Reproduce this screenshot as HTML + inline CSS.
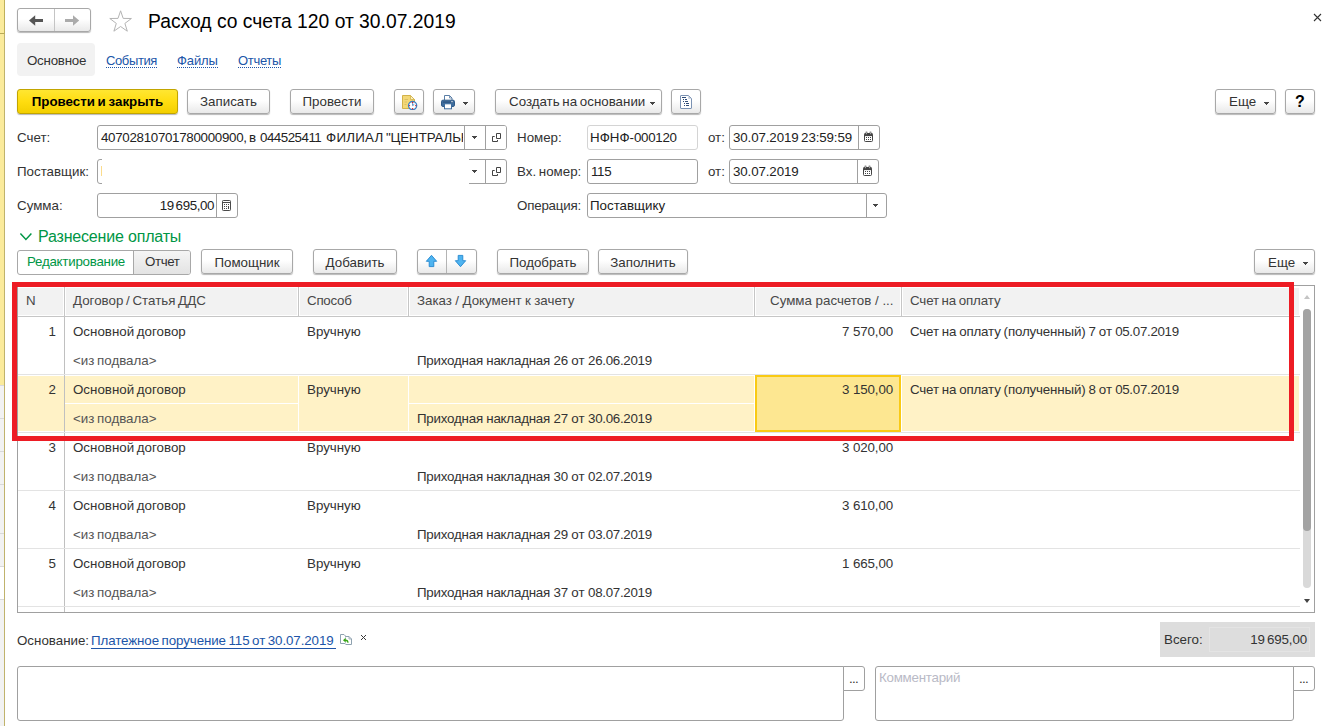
<!DOCTYPE html>
<html lang="ru">
<head>
<meta charset="utf-8">
<title>Расход со счета 120 от 30.07.2019</title>
<style>
html,body{margin:0;padding:0;}
body{width:1322px;height:726px;position:relative;overflow:hidden;background:#fff;
  font-family:"Liberation Sans",sans-serif;font-size:13.33px;color:#333;word-spacing:-1px;}
.a{position:absolute;white-space:nowrap;}
.t{position:absolute;white-space:nowrap;line-height:16px;height:16px;}
.btn{position:absolute;box-sizing:border-box;border:1px solid #a8a8a8;border-radius:3px;
  background:linear-gradient(#ffffff 0%,#ffffff 45%,#e9e9e9 100%);
  box-shadow:0 1px 1px rgba(0,0,0,.28);height:25px;line-height:23px;text-align:center;white-space:nowrap;color:#333;}
.fld{position:absolute;box-sizing:border-box;border:1px solid #a0a0a0;border-radius:3px;background:#fff;height:25px;line-height:23px;white-space:nowrap;overflow:hidden;color:#222;}
.fld .v{position:absolute;left:2px;top:0;}
.sep{position:absolute;top:0;bottom:0;width:1px;background:#a0a0a0;}
.lnk{color:#2055a8;}
.n{letter-spacing:-0.3px;}
.d{letter-spacing:-0.12px;}
.p1{letter-spacing:-0.21px;}
.p2{letter-spacing:-0.16px;}
.m{letter-spacing:-0.12px;word-spacing:0;}
.dots{text-align:center;line-height:23px;letter-spacing:-0.7px;color:#333;text-indent:-1px;}
.dd{position:absolute;width:0;height:0;border-left:2.5px solid transparent;border-right:2.5px solid transparent;border-top:3px solid #444;}
</style>
</head>
<body>

<!-- left strip -->
<div class="a" style="left:0;top:0;width:4px;height:385px;background:#fbeb9c;"></div>
<div class="a" style="left:0;top:385px;width:4px;height:341px;background:#f2f2f2;"></div>
<div class="a" style="left:0;top:566px;width:4px;height:33px;background:#fff;"></div>
<div class="a" style="left:4px;top:0;width:1px;height:726px;background:#c0b36c;"></div>
<div class="a" style="left:4px;top:0;width:1px;height:34px;background:#bfb05a;"></div>
<div class="a" style="left:0;top:33px;width:4px;height:1px;background:#b8a957;"></div>
<div class="a" style="left:0;top:385px;width:4px;height:1px;background:#d9d9d9;"></div>
<div class="a" style="left:0;top:418px;width:4px;height:1px;background:#d9d9d9;"></div>
<div class="a" style="left:0;top:451px;width:4px;height:1px;background:#d9d9d9;"></div>
<div class="a" style="left:0;top:484px;width:4px;height:1px;background:#d9d9d9;"></div>
<div class="a" style="left:0;top:533px;width:4px;height:1px;background:#d9d9d9;"></div>
<div class="a" style="left:0;top:566px;width:4px;height:1px;background:#d9d9d9;"></div>
<div class="a" style="left:0;top:599px;width:4px;height:1px;background:#d9d9d9;"></div>

<!-- header -->
<div id="nav" class="btn" style="left:17px;top:8px;width:74px;height:24px;"></div>
<div class="a" style="left:54px;top:9px;width:1px;height:22px;background:#c4c4c4;"></div>
<svg class="a" style="left:17px;top:8px;" width="74" height="24" viewBox="0 0 74 24">
  <path d="M12 12.5 L18.2 7.2 L18.2 11 L26 11 L26 14 L18.2 14 L18.2 17.8 Z" fill="#555"/>
  <path d="M62.2 12.5 L56 7.2 L56 11 L48 11 L48 14 L56 14 L56 17.8 Z" fill="#ababab"/>
</svg>
<svg class="a" style="left:108px;top:9px;" width="26" height="24" viewBox="0 0 26 24">
  <path d="M12.6 1.8 L15.2 9.4 L23.4 9.5 L16.9 14.4 L19.3 22.2 L12.6 17.5 L5.9 22.2 L8.3 14.4 L1.8 9.5 L10 9.4 Z" fill="#fff" stroke="#b4b4b4" stroke-width="1"/>
</svg>
<div id="title" class="a" style="left:148px;top:10px;font-size:19.3px;line-height:24px;color:#000;word-spacing:0;">Расход со счета 120 от 30.07.2019</div>
<svg class="a" style="left:1313px;top:13px;" width="9" height="9" viewBox="0 0 9 9"><path d="M1 1 L8 8 M8 1 L1 8" stroke="#333" stroke-width="1.1" fill="none"/></svg>

<!-- tabs -->
<div class="a" style="left:17px;top:43px;width:78px;height:33px;background:#f2f2f2;border-radius:4px;"></div>
<div class="t" id="tab1" style="left:27px;top:53px;color:#333;letter-spacing:-0.25px;">Основное</div>
<div class="t lnk" id="tab2" style="left:106px;top:53px;border-bottom:1px dotted #2055a8;height:14px;font-size:13px;letter-spacing:-0.38px;">События</div>
<div class="t lnk" id="tab3" style="left:177px;top:53px;border-bottom:1px dotted #2055a8;height:14px;font-size:13px;letter-spacing:-0.1px;">Файлы</div>
<div class="t lnk" id="tab4" style="left:238px;top:53px;border-bottom:1px dotted #2055a8;height:14px;font-size:13px;letter-spacing:-0.32px;">Отчеты</div>

<!-- main toolbar -->
<div class="btn" id="b1" style="left:17px;top:89px;width:161px;background:linear-gradient(#ffe632 0%,#ffdd10 50%,#f3cf00 100%);border-color:#c2a500;color:#000;font-weight:bold;">Провести и закрыть</div>
<div class="btn" id="b2" style="left:187px;top:89px;width:83px;">Записать</div>
<div class="btn" id="b3" style="left:290px;top:89px;width:84px;">Провести</div>
<div class="btn" id="b4" style="left:394px;top:89px;width:30px;"></div>
<svg class="a" style="left:400px;top:94px;" width="18" height="16" viewBox="0 0 18 16">
  <path d="M2.5 1.5 L10.5 1.5 L14.5 5.5 L14.5 14.5 L2.5 14.5 Z" fill="#f3d877" stroke="#d2b24a" stroke-width="1"/>
  <path d="M10.5 1.5 L10.5 5.5 L14.5 5.5 Z" fill="#fbf0c0" stroke="#d2b24a" stroke-width="0.8"/>
  <path d="M4.5 5.5 H8 M4.5 8 H7 M4.5 10.5 H6.5" stroke="#dcc062" stroke-width="1"/>
  <circle cx="12.6" cy="11.6" r="4.1" fill="#fff" stroke="#3b7fc1" stroke-width="1.3"/>
  <path d="M12.6 11.6 L12.6 9.2 M12.6 11.6 L14.3 10.4" stroke="#3b7fc1" stroke-width="0.9" fill="none"/>
  <circle cx="12.6" cy="8.5" r="0.7" fill="#e21d1d"/><circle cx="12.6" cy="14.7" r="0.7" fill="#e21d1d"/>
  <circle cx="9.5" cy="11.6" r="0.7" fill="#e21d1d"/><circle cx="15.7" cy="11.6" r="0.7" fill="#e21d1d"/>
</svg>
<div class="btn" id="b5" style="left:433px;top:89px;width:42px;"></div>
<svg class="a" style="left:439px;top:94px;" width="18" height="16" viewBox="0 0 18 16">
  <path d="M5.5 6 L5.5 1.5 L10.5 1.5 L13 4 L13 6" fill="#fff" stroke="#5a7ea6" stroke-width="1"/>
  <path d="M10.5 1.5 L10.5 4 L13 4" fill="none" stroke="#5a7ea6" stroke-width="0.8"/>
  <rect x="2.5" y="6.2" width="13" height="6.3" rx="1.4" fill="#3e6d9e" stroke="#2f5a88" stroke-width="1"/>
  <rect x="4" y="7.6" width="10" height="1" fill="#2a4f79"/>
  <rect x="12.2" y="7.3" width="1.6" height="0.9" fill="#fff"/>
  <rect x="5.5" y="9.8" width="7" height="5" fill="#fff" stroke="#3e6d9e" stroke-width="1"/>
</svg>
<svg class="a" style="left:462px;top:102px;" width="7" height="4" viewBox="0 0 7 4"><path d="M1 0 H6 V1 H5 V2 H4 V3 H3 V2 H2 V1 H1 Z" fill="#454545"/></svg>
<div class="btn" id="b6" style="left:495px;top:89px;width:167px;text-align:left;padding-left:13px;">Создать на основании</div>
<svg class="a" style="left:649px;top:102px;" width="7" height="4" viewBox="0 0 7 4"><path d="M1 0 H6 V1 H5 V2 H4 V3 H3 V2 H2 V1 H1 Z" fill="#454545"/></svg>
<div class="btn" id="b7" style="left:671px;top:89px;width:30px;"></div>
<svg class="a" style="left:678px;top:94px;" width="16" height="16" viewBox="0 0 16 16">
  <path d="M2.5 2 Q2.5 1.5 3 1.5 L10.5 1.5 L13.5 4.5 L13.5 14 Q13.5 14.5 13 14.5 L3 14.5 Q2.5 14.5 2.5 14 Z" fill="#fff" stroke="#7b92b3" stroke-width="1"/>
  <path d="M10.3 1.7 L10.3 4.7 L13.3 4.7 Z" fill="#b9c6d8"/>
  <path d="M4 3.5 H8 M5 5.5 H6 M7 5.5 H9 M5 7.5 H6 M7 7.5 H10 M6 9.5 H7 M8 9.5 H11 M6 11.5 H7 M8 11.5 H11" stroke="#2f4c78" stroke-width="1"/>
</svg>
<div class="btn" id="b8" style="left:1215px;top:89px;width:61px;text-align:left;padding-left:13px;">Еще</div>
<svg class="a" style="left:1263px;top:102px;" width="7" height="4" viewBox="0 0 7 4"><path d="M1 0 H6 V1 H5 V2 H4 V3 H3 V2 H2 V1 H1 Z" fill="#454545"/></svg>
<div class="btn" id="b9" style="left:1285px;top:89px;width:30px;color:#000;font-weight:bold;font-size:16px;line-height:24px;">?</div>

<!-- fields -->
<div class="t" style="left:17px;top:130px;">Счет:</div>
<div class="fld" style="left:97px;top:125px;width:410px;"><span class="v n" style="left:3px;">40702810701780000900,</span><span class="v" style="left:151px;">в</span><span class="v n" style="left:162px;letter-spacing:-0.5px;">044525411</span><span class="v" style="left:228px;letter-spacing:0.25px;">ФИЛИАЛ</span><span class="v" style="left:288px;letter-spacing:-0.12px;">"ЦЕНТРАЛЬНЫЙ"</span>
  <div class="a" style="left:364.5px;top:0;width:45px;height:23px;background:#fff;"></div>
  <div class="sep" style="left:366px;"></div><div class="sep" style="left:387px;"></div></div>
<svg class="a" style="left:471px;top:136px;" width="7" height="4" viewBox="0 0 7 4"><path d="M1 0 H6 V1 H5 V2 H4 V3 H3 V2 H2 V1 H1 Z" fill="#454545"/></svg>
<svg class="a" style="left:491px;top:132px;" width="12" height="12" viewBox="0 0 12 12"><path d="M5.5 1.5 H9.5 V6.5 H5.5 Z" fill="none" stroke="#444" stroke-width="1"/><path d="M3.7 4.5 H1.5 V9.5 H6.5 V8" fill="none" stroke="#444" stroke-width="1"/></svg>

<div class="t" style="left:17px;top:164px;">Поставщик:</div>
<div class="fld" style="left:97px;top:159px;width:410px;">
  <div class="sep" style="left:387px;"></div></div>
<div class="a" style="left:102px;top:158px;width:367px;height:27px;background:#fff;"></div>
<div class="a" style="left:101px;top:166px;width:1px;height:10px;background:#fbdc8c;"></div>
<svg class="a" style="left:471px;top:170px;" width="7" height="4" viewBox="0 0 7 4"><path d="M1 0 H6 V1 H5 V2 H4 V3 H3 V2 H2 V1 H1 Z" fill="#454545"/></svg>
<svg class="a" style="left:491px;top:166px;" width="12" height="12" viewBox="0 0 12 12"><path d="M5.5 1.5 H9.5 V6.5 H5.5 Z" fill="none" stroke="#444" stroke-width="1"/><path d="M3.7 4.5 H1.5 V9.5 H6.5 V8" fill="none" stroke="#444" stroke-width="1"/></svg>

<div class="t" style="left:17px;top:198px;">Сумма:</div>
<div class="fld" style="left:97px;top:193px;width:141px;"><span class="a m" style="right:23px;top:0;word-spacing:-1.5px;letter-spacing:-0.4px;">19 695,00</span><div class="sep" style="left:118px;"></div></div>
<svg class="a" style="left:222px;top:200px;" width="10" height="12" viewBox="0 0 10 12"><rect x="0.5" y="0.5" width="8" height="10" rx="0.8" fill="#fff" stroke="#4a4a4a" stroke-width="1"/><path d="M1 2.5 H8.5" stroke="#4a4a4a" stroke-width="1"/><g fill="#4a4a4a"><rect x="2" y="4" width="1" height="1"/><rect x="4" y="4" width="1" height="1"/><rect x="6" y="4" width="1" height="1"/><rect x="2" y="6" width="1" height="1"/><rect x="4" y="6" width="1" height="1"/><rect x="6" y="6" width="1" height="3"/><rect x="2" y="8" width="1" height="1"/><rect x="4" y="8" width="1" height="1"/></g></svg>

<div class="t" style="left:517px;top:130px;">Номер:</div>
<div class="fld" style="left:587px;top:125px;width:111px;border-color:#d4d4d4;"><span class="v">НФНФ-<span class="n">000120</span></span></div>
<div class="t" style="left:708px;top:130px;">от:</div>
<div class="fld" style="left:729px;top:125px;width:151px;"><span class="v d" style="left:3px;">30.07.2019 23:59:59</span><div class="sep" style="left:128px;"></div></div>
<svg class="a cal" style="left:864px;top:131px;" width="10" height="12" viewBox="0 0 10 12"><rect x="0.5" y="2.5" width="8" height="8" rx="0.9" fill="#fff" stroke="#444" stroke-width="1"/><rect x="0.5" y="2.5" width="8" height="2.6" fill="#444"/><rect x="2" y="1" width="1" height="2.2" fill="#fff" stroke="#444" stroke-width="0.6"/><rect x="6" y="1" width="1" height="2.2" fill="#fff" stroke="#444" stroke-width="0.6"/><g fill="#444"><rect x="2" y="6" width="1" height="1"/><rect x="4" y="6" width="1" height="1"/><rect x="6" y="6" width="1" height="1"/><rect x="2" y="8" width="1" height="1"/><rect x="4" y="8" width="1" height="1"/><rect x="6" y="8" width="1" height="1"/></g></svg>

<div class="t" style="left:517px;top:164px;">Вх. номер:</div>
<div class="fld" style="left:587px;top:159px;width:111px;"><span class="v n" style="left:3px;">115</span></div>
<div class="t" style="left:708px;top:164px;">от:</div>
<div class="fld" style="left:729px;top:159px;width:150px;"><span class="v d" style="left:3px;">30.07.2019</span><div class="sep" style="left:127px;"></div></div>
<svg class="a cal" style="left:863px;top:165px;" width="10" height="12" viewBox="0 0 10 12"><rect x="0.5" y="2.5" width="8" height="8" rx="0.9" fill="#fff" stroke="#444" stroke-width="1"/><rect x="0.5" y="2.5" width="8" height="2.6" fill="#444"/><rect x="2" y="1" width="1" height="2.2" fill="#fff" stroke="#444" stroke-width="0.6"/><rect x="6" y="1" width="1" height="2.2" fill="#fff" stroke="#444" stroke-width="0.6"/><g fill="#444"><rect x="2" y="6" width="1" height="1"/><rect x="4" y="6" width="1" height="1"/><rect x="6" y="6" width="1" height="1"/><rect x="2" y="8" width="1" height="1"/><rect x="4" y="8" width="1" height="1"/><rect x="6" y="8" width="1" height="1"/></g></svg>

<div class="t" style="left:517px;top:198px;letter-spacing:-0.2px;">Операция:</div>
<div class="fld" style="left:587px;top:193px;width:300px;"><span class="v">Поставщику</span><div class="sep" style="left:278px;"></div></div>
<svg class="a" style="left:872px;top:204px;" width="7" height="4" viewBox="0 0 7 4"><path d="M1 0 H6 V1 H5 V2 H4 V3 H3 V2 H2 V1 H1 Z" fill="#454545"/></svg>

<!-- section -->
<svg class="a" style="left:19px;top:232px;" width="14" height="10" viewBox="0 0 14 10"><path d="M1.4 1.6 L6.9 7.4 L12.4 1.6" stroke="#009646" stroke-width="1.5" fill="none"/></svg>
<div class="a" id="sect" style="left:38px;top:227px;font-size:16px;line-height:20px;color:#009646;letter-spacing:-0.18px;word-spacing:0;">Разнесение оплаты</div>

<!-- sub toolbar -->
<div class="btn" style="left:17px;top:250px;width:174px;box-shadow:none;background:#fff;"></div>
<div class="a" style="left:133px;top:251px;width:57px;height:23px;background:linear-gradient(#f5f5f5,#e3e3e3);border-left:1px solid #a8a8a8;border-radius:0 2px 2px 0;box-sizing:border-box;"></div>
<div class="t" id="tg1" style="left:27px;top:254px;color:#009646;letter-spacing:-0.25px;">Редактирование</div>
<div class="t" id="tg2" style="left:145px;top:254px;letter-spacing:-0.4px;">Отчет</div>
<div class="btn" style="left:201px;top:249px;width:92px;line-height:25px;">Помощник</div>
<div class="btn" style="left:313px;top:249px;width:84px;line-height:25px;">Добавить</div>
<div class="btn" style="left:417px;top:249px;width:60px;"></div>
<div class="a" style="left:446px;top:250px;width:1px;height:23px;background:#b4b4b4;"></div>
<svg class="a" style="left:417px;top:249px;" width="60" height="25" viewBox="0 0 60 25">
  <path d="M14.5 6.3 L19.7 12.3 L16.8 12.3 L16.8 17.6 L12.2 17.6 L12.2 12.3 L9.3 12.3 Z" fill="#4fb4f0" stroke="#2387cf" stroke-width="0.9"/>
  <path d="M43.5 17.7 L48.7 11.7 L45.8 11.7 L45.8 6.4 L41.2 6.4 L41.2 11.7 L38.3 11.7 Z" fill="#4fb4f0" stroke="#2387cf" stroke-width="0.9"/>
</svg>
<div class="btn" style="left:497px;top:249px;width:92px;line-height:25px;">Подобрать</div>
<div class="btn" style="left:598px;top:249px;width:90px;line-height:25px;">Заполнить</div>
<div class="btn" style="left:1254px;top:249px;width:61px;line-height:25px;text-align:left;padding-left:13px;">Еще</div>
<svg class="a" style="left:1302px;top:262px;" width="7" height="4" viewBox="0 0 7 4"><path d="M1 0 H6 V1 H5 V2 H4 V3 H3 V2 H2 V1 H1 Z" fill="#454545"/></svg>

<!-- TABLE START -->
<!-- table -->
<div class="a" style="left:17px;top:285px;width:1298px;height:328px;box-sizing:border-box;border:1px solid #a0a0a0;background:#fff;"></div>
<div class="a" style="left:18px;top:288px;width:1281px;height:27px;background:#f2f2f2;"></div>
<div class="a" style="left:18px;top:316px;width:1282px;height:1px;background:#c6c6c6;"></div>
<div class="a" style="left:63px;top:287px;width:1px;height:29px;background:#fff;"></div>
<div class="a" style="left:64px;top:287px;width:1px;height:29px;background:#c6c6c6;"></div>
<div class="a" style="left:65px;top:287px;width:1px;height:29px;background:#fff;"></div>
<div class="a" style="left:297px;top:287px;width:1px;height:29px;background:#fff;"></div>
<div class="a" style="left:298px;top:287px;width:1px;height:29px;background:#c6c6c6;"></div>
<div class="a" style="left:299px;top:287px;width:1px;height:29px;background:#fff;"></div>
<div class="a" style="left:407px;top:287px;width:1px;height:29px;background:#fff;"></div>
<div class="a" style="left:408px;top:287px;width:1px;height:29px;background:#c6c6c6;"></div>
<div class="a" style="left:409px;top:287px;width:1px;height:29px;background:#fff;"></div>
<div class="a" style="left:753px;top:287px;width:1px;height:29px;background:#fff;"></div>
<div class="a" style="left:754px;top:287px;width:1px;height:29px;background:#c6c6c6;"></div>
<div class="a" style="left:755px;top:287px;width:1px;height:29px;background:#fff;"></div>
<div class="a" style="left:900px;top:287px;width:1px;height:29px;background:#fff;"></div>
<div class="a" style="left:901px;top:287px;width:1px;height:29px;background:#c6c6c6;"></div>
<div class="a" style="left:902px;top:287px;width:1px;height:29px;background:#fff;"></div>
<div class="t th" style="left:26px;top:293px;color:#484848;">N</div>
<div class="t th" style="left:73px;top:293px;color:#484848;">Договор / Статья ДДС</div>
<div class="t th" style="left:307px;top:293px;color:#484848;letter-spacing:-0.25px;">Способ</div>
<div class="t th" style="left:417px;top:293px;color:#484848;word-spacing:-0.3px;">Заказ / Документ к зачету</div>
<div class="t th" style="left:770px;top:293px;color:#484848;word-spacing:0;">Сумма расчетов / ...</div>
<div class="t th" style="left:910px;top:293px;color:#484848;letter-spacing:-0.12px;">Счет на оплату</div>
<div class="a" style="left:64px;top:317px;width:1px;height:295px;background:#c0c0c0;"></div>
<div class="a" style="left:18px;top:374px;width:1282px;height:1px;background:#e3e3e3;"></div>
<div class="t" style="left:20px;width:36px;text-align:right;top:324px;">1</div>
<div class="t" style="left:73px;top:324px;">Основной договор</div>
<div class="t" style="left:73px;top:353px;color:#555;">&lt;из подвала&gt;</div>
<div class="t" style="left:307px;top:324px;">Вручную</div>
<div class="t" style="left:417px;top:353px;word-spacing:-0.2px;"><span class="p1">Приходная накладная</span> <span class="n">26</span> от <span class="n">26.06.2019</span></div>
<div class="t" style="left:755px;width:138px;text-align:right;top:324px;"><span class="m">7 570,00</span></div>
<div class="t" style="left:910px;top:324px;word-spacing:-0.6px;"><span class="p2">Счет на оплату (полученный)</span> <span class="n">7</span> от <span class="n">05.07.2019</span></div>
<div class="a" style="left:18px;top:376px;width:46px;height:55px;background:#fff2c6;"></div>
<div class="a" style="left:65px;top:376px;width:1234px;height:55px;background:#fff2c6;"></div>
<div class="a" style="left:298px;top:376px;width:1px;height:55px;background:#fff;"></div>
<div class="a" style="left:408px;top:376px;width:1px;height:55px;background:#fff;"></div>
<div class="a" style="left:754px;top:376px;width:1px;height:55px;background:#fff;"></div>
<div class="a" style="left:901px;top:376px;width:1px;height:55px;background:#fff;"></div>
<div class="a" style="left:65px;top:403px;width:233px;height:1px;background:#fff;"></div>
<div class="a" style="left:409px;top:403px;width:345px;height:1px;background:#fff;"></div>
<div class="a" style="left:755px;top:375px;width:146px;height:57px;box-sizing:border-box;border:2px solid #f9ca14;background:#fde791;"></div>
<div class="a" style="left:18px;top:432px;width:1282px;height:1px;background:#e3e3e3;"></div>
<div class="t" style="left:20px;width:36px;text-align:right;top:382px;">2</div>
<div class="t" style="left:73px;top:382px;">Основной договор</div>
<div class="t" style="left:73px;top:411px;color:#555;">&lt;из подвала&gt;</div>
<div class="t" style="left:307px;top:382px;">Вручную</div>
<div class="t" style="left:417px;top:411px;word-spacing:-0.2px;"><span class="p1">Приходная накладная</span> <span class="n">27</span> от <span class="n">30.06.2019</span></div>
<div class="t" style="left:755px;width:138px;text-align:right;top:382px;"><span class="m">3 150,00</span></div>
<div class="t" style="left:910px;top:382px;word-spacing:-0.6px;"><span class="p2">Счет на оплату (полученный)</span> <span class="n">8</span> от <span class="n">05.07.2019</span></div>
<div class="a" style="left:18px;top:490px;width:1282px;height:1px;background:#e3e3e3;"></div>
<div class="t" style="left:20px;width:36px;text-align:right;top:440px;">3</div>
<div class="t" style="left:73px;top:440px;">Основной договор</div>
<div class="t" style="left:73px;top:469px;color:#555;">&lt;из подвала&gt;</div>
<div class="t" style="left:307px;top:440px;">Вручную</div>
<div class="t" style="left:417px;top:469px;word-spacing:-0.2px;"><span class="p1">Приходная накладная</span> <span class="n">30</span> от <span class="n">02.07.2019</span></div>
<div class="t" style="left:755px;width:138px;text-align:right;top:440px;"><span class="m">3 020,00</span></div>
<div class="a" style="left:18px;top:548px;width:1282px;height:1px;background:#e3e3e3;"></div>
<div class="t" style="left:20px;width:36px;text-align:right;top:498px;">4</div>
<div class="t" style="left:73px;top:498px;">Основной договор</div>
<div class="t" style="left:73px;top:527px;color:#555;">&lt;из подвала&gt;</div>
<div class="t" style="left:307px;top:498px;">Вручную</div>
<div class="t" style="left:417px;top:527px;word-spacing:-0.2px;"><span class="p1">Приходная накладная</span> <span class="n">29</span> от <span class="n">03.07.2019</span></div>
<div class="t" style="left:755px;width:138px;text-align:right;top:498px;"><span class="m">3 610,00</span></div>
<div class="a" style="left:18px;top:606px;width:1282px;height:1px;background:#e3e3e3;"></div>
<div class="t" style="left:20px;width:36px;text-align:right;top:556px;">5</div>
<div class="t" style="left:73px;top:556px;">Основной договор</div>
<div class="t" style="left:73px;top:585px;color:#555;">&lt;из подвала&gt;</div>
<div class="t" style="left:307px;top:556px;">Вручную</div>
<div class="t" style="left:417px;top:585px;word-spacing:-0.2px;"><span class="p1">Приходная накладная</span> <span class="n">37</span> от <span class="n">08.07.2019</span></div>
<div class="t" style="left:755px;width:138px;text-align:right;top:556px;"><span class="m">1 665,00</span></div>
<div class="a" style="left:64px;top:375px;width:1px;height:57px;background:#c0c0c0;"></div>
<div class="a" style="left:1303px;top:309px;width:8px;height:279px;background:#d9d9d9;border-radius:4px;"></div>
<div class="a" style="left:1303px;top:309px;width:8px;height:222px;background:#a3a3a3;border-radius:4px;"></div>
<div class="a" style="left:1304px;top:295px;width:0;height:0;border-left:3px solid transparent;border-right:3px solid transparent;border-bottom:4px solid #c4c4c4;"></div>
<div class="a" style="left:1304px;top:599px;width:0;height:0;border-left:3px solid transparent;border-right:3px solid transparent;border-top:4px solid #444;"></div>
<!-- TABLE END -->

<!-- red frame -->
<div class="a" style="left:12px;top:282px;width:1282px;height:159px;box-sizing:border-box;border:5px solid #ed1c24;"></div>

<!-- footer -->
<div class="t" style="left:17px;top:633px;">Основание:</div>
<div class="t lnk" id="baselnk" style="left:91px;top:633px;height:15px;border-bottom:1px solid #2055a8;letter-spacing:-0.09px;">Платежное поручение 115 от 30.07.2019&nbsp;</div>
<svg class="a" style="left:339px;top:633px;" width="14" height="13" viewBox="0 0 14 13">
  <path d="M1.5 1.5 H5 L6.5 3 H6.5 V10.5 H1.5 Z" fill="#fff" stroke="#8fa2b0" stroke-width="1"/>
  <path d="M6.5 3.5 H10 L12.5 6 V11.5 H6.5" fill="#fff" stroke="#8fa2b0" stroke-width="1"/>
  <path d="M10 3.5 V6 H12.5" fill="none" stroke="#8fa2b0" stroke-width="0.8"/>
  <path d="M4 7.2 L6.6 4.8 L6.6 6.4 Q9.6 6.4 9.6 9.8 L8.4 9.8 Q8.4 8 6.6 8 L6.6 9.6 Z" fill="#3aa617"/>
</svg>
<svg class="a" style="left:360px;top:634px;" width="7" height="7" viewBox="0 0 7 7"><path d="M1 1 L6 6 M6 1 L1 6" stroke="#3a3a3a" stroke-width="1" fill="none"/></svg>
<div class="a" style="left:1160px;top:622px;width:155px;height:35px;background:#dddddd;"></div>
<div class="a" style="left:1209px;top:627px;width:101px;height:25px;box-sizing:border-box;border:1px solid #e4e4e4;"></div>
<div class="t" style="left:1164px;top:632px;">Всего:</div>
<div class="t m" style="right:15px;top:632px;word-spacing:-1.5px;">19 695,00</div>

<div class="fld" style="left:17px;top:666px;width:827px;height:55px;border-radius:3px 0 3px 3px;"></div>
<div class="fld dots" style="left:843px;top:666px;width:22px;height:25px;border-radius:0 3px 3px 0;">...</div>
<div class="fld" style="left:875px;top:666px;width:419px;height:55px;border-radius:3px 0 3px 3px;"><span class="a" style="left:3px;top:-1px;color:#b9bac6;letter-spacing:-0.25px;">Комментарий</span></div>
<div class="fld dots" style="left:1293px;top:666px;width:22px;height:25px;border-radius:0 3px 3px 0;">...</div>

</body>
</html>
